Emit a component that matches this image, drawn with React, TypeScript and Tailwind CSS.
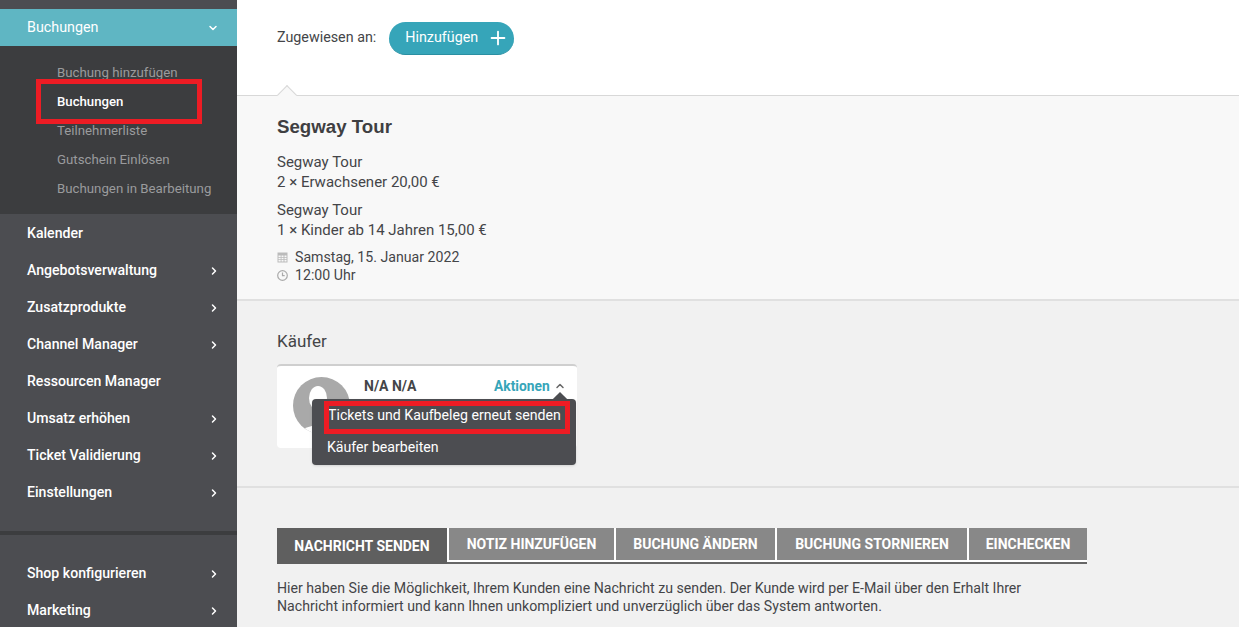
import React from 'react';
import { ChevronDown, ChevronRight, ChevronUp, Plus } from 'lucide-react';

const subItems = ['Buchung hinzufügen', 'Buchungen', 'Teilnehmerliste', 'Gutschein Einlösen', 'Buchungen in Bearbeitung'];
const navItems = [
  { label: 'Kalender', arrow: false },
  { label: 'Angebotsverwaltung', arrow: true },
  { label: 'Zusatzprodukte', arrow: true },
  { label: 'Channel Manager', arrow: true },
  { label: 'Ressourcen Manager', arrow: false },
  { label: 'Umsatz erhöhen', arrow: true },
  { label: 'Ticket Validierung', arrow: true },
  { label: 'Einstellungen', arrow: true },
];
const tabs = [
  { label: 'NOTIZ HINZUFÜGEN', width: 'w-[165px]' },
  { label: 'BUCHUNG ÄNDERN', width: 'w-[159px]' },
  { label: 'BUCHUNG STORNIEREN', width: 'w-[190px]' },
  { label: 'EINCHECKEN', width: 'w-[118px]' },
];

function NavRow({ label, arrow }: { label: string; arrow: boolean }) {
  return (
    <div className="h-[37px] pl-[27px] pr-[17px] flex items-center justify-between text-[14.1px] font-medium text-white">
      <span>{label}</span>
      {arrow && <ChevronRight size={12} strokeWidth={3} />}
    </div>
  );
}

function Sidebar() {
  return (
    <aside className="w-[237px] shrink-0 h-[627px] overflow-hidden bg-[#4c4d51]">
      <div className="h-[9px]" />
      <div className="h-[37px] pl-[27px] pr-[18px] flex items-center justify-between bg-[#5fb6c3] text-[14.3px] text-white">
        <span>Buchungen</span>
        <ChevronDown size={12} strokeWidth={3} />
      </div>
      <div className="h-[168px] pt-[12px] bg-[#3c3d3f] relative">
        {subItems.map((item) => (
          <div key={item} className={item === 'Buchungen'
            ? 'h-[29px] pl-[57px] flex items-center text-[13.2px] font-medium text-white'
            : 'h-[29px] pl-[57px] flex items-center text-[13.25px] text-[#9a9b9d]'}>
            {item}
          </div>
        ))}
        <div className="absolute left-[36px] top-[33px] w-[166px] h-[45px] border-[5px] border-[#ed1c24]" />
      </div>
      <div className="h-[1px]" />
      {navItems.map((item) => <NavRow key={item.label} {...item} />)}
      <div className="h-[20px]" />
      <div className="h-[4px] bg-[#3c3d3f]" />
      <div className="h-[20px]" />
      <NavRow label="Shop konfigurieren" arrow />
      <NavRow label="Marketing" arrow />
    </aside>
  );
}

function Main() {
  return (
    <main className="flex-1 h-[627px] overflow-hidden text-[14.15px] text-[#444548] bg-[#f1f1f1]">
      <div className="h-[95px] bg-white pl-[40px] pt-[22px] flex items-start gap-[13px] relative">
        <span className="leading-[30px] text-[14.3px]">Zugewiesen an:</span>
        <button className="h-[33px] w-[125px] rounded-full bg-[#36a5b9] border-b border-[#2a8fa2] text-white flex items-center justify-between pl-4 pr-[5px]">
          <span className="text-[14.3px]">Hinzufügen</span>
          <Plus size={22} strokeWidth={2} />
        </button>
        <div className="absolute z-10 left-[43px] bottom-[-7px] w-[14px] h-[14px] rotate-45 bg-[#f8f8f8] border-l border-t border-[#d8d8d8]" />
      </div>
      <section className="h-[206px] bg-[#f8f8f8] border-t border-[#d8d8d8] border-b-2 border-b-[#e0e0e0] pl-[40px] pt-[19px] relative">
        <h2 className="text-[18.7px] leading-[24px] font-bold font-['Liberation_Sans',sans-serif] text-[#3f3f42]">Segway Tour</h2>
        <p className="mt-[13px] text-[15px] leading-[20px]">Segway Tour<br />2 × Erwachsener 20,00 €</p>
        <p className="mt-[8px] text-[15px] leading-[20px]">Segway Tour<br />1 × Kinder ab 14 Jahren 15,00 €</p>
        <div className="mt-[8px] flex items-center gap-[7px] leading-[18px]">
          <svg width="11" height="11" viewBox="0 0 11 11" fill="#bbb"><path d="M0.5 0.5h10v10h-10zM1.5 3.5v1.5h2.2V3.5zm3 0v1.5h2V3.5zm3 0v1.5h2V3.5zM1.5 5.8v1.5h2.2V5.8zm3 0v1.5h2V5.8zm3 0v1.5h2V5.8zM1.5 8v1.5h2.2V8zm3 0v1.5h2V8zm3 0v1.5h2V8z" fillRule="evenodd" /></svg>
          <span>Samstag, 15. Januar 2022</span>
        </div>
        <div className="flex items-center gap-[7px] leading-[18px]">
          <svg width="11" height="11" viewBox="0 0 11 11" fill="none" stroke="#aaa" strokeWidth="1.2"><circle cx="5.5" cy="5.5" r="4.8" /><path d="M5.5 2.6v3.1h2.2" /></svg>
          <span>12:00 Uhr</span>
        </div>
      </section>
      <section className="h-[187px] border-b-2 border-[#e0e0e0] pl-[40px] pt-[29px]">
        <h3 className="text-[17px] leading-[22px]">Käufer</h3>
        <div className="mt-[12px] w-[300px] h-[84px] bg-white rounded-[4px] border-t-2 border-[#cfcfcf] relative">
          <svg className="absolute left-[16px] top-[11px]" width="57" height="57" viewBox="0 0 57 57">
            <clipPath id="avatar"><circle cx="28.5" cy="28.5" r="28.5" /></clipPath>
            <g clipPath="url(#avatar)">
              <rect width="57" height="57" fill="#a9a9a9" />
              <ellipse cx="25" cy="21" rx="9" ry="12" fill="#fff" />
              <ellipse cx="28" cy="62" rx="24" ry="14" fill="#fff" />
            </g>
          </svg>
          <span className="absolute left-[87px] top-[10px] font-bold text-[14px]">N/A N/A</span>
          <span className="absolute left-[217px] top-[10px] font-bold text-[13.8px] text-[#36a5b9] flex items-center gap-[4px]">Aktionen <ChevronUp size={12} strokeWidth={3} className="text-[#666]" /></span>
          <div className="absolute left-[35px] top-[33px] w-[264px] h-[66px] pt-[1px] rounded-[4px] bg-[#4c4d51] text-white shadow-sm">
            <div className="absolute right-[11px] top-[-5px] w-[10px] h-[10px] rotate-45 bg-[#4c4d51]" />
            <div className="h-[32px] pl-[16px] flex items-center">Tickets und Kaufbeleg erneut senden</div>
            <div className="h-[32px] pl-[15px] flex items-center">Käufer bearbeiten</div>
            <div className="absolute left-[12px] top-[2px] w-[246px] h-[33px] border-[5px] border-[#ed1c24]" />
          </div>
        </div>
      </section>
      <section className="pl-[40px] pt-[40px]">
        <div className="w-[810px] h-[36px] flex gap-[2px] relative">
          <div className="w-[170px] h-[36px] bg-[#5f5f5f] text-white text-[14px] font-bold flex items-center justify-center">NACHRICHT SENDEN</div>
          <div className="absolute left-[170px] right-0 top-0 h-[34px] bg-white" />
          <div className="absolute left-[170px] right-0 top-[34px] h-[2px] bg-[#666666]" />
          {tabs.map((tab) => (
            <div key={tab.label} className={`${tab.width} h-[32px] bg-[#888888] text-white text-[14px] font-bold flex items-center justify-center relative`}>{tab.label}</div>
          ))}
        </div>
        <p className="mt-[15px] leading-[18px] w-[760px]">Hier haben Sie die Möglichkeit, Ihrem Kunden eine Nachricht zu senden. Der Kunde wird per E-Mail über den Erhalt Ihrer Nachricht informiert und kann Ihnen unkompliziert und unverzüglich über das System antworten.</p>
      </section>
    </main>
  );
}

export default function App() {
  return (
    <div className="flex w-[1239px] h-[627px] overflow-hidden font-['Roboto','Liberation_Sans',sans-serif]">
      <Sidebar />
      <Main />
    </div>
  );
}
